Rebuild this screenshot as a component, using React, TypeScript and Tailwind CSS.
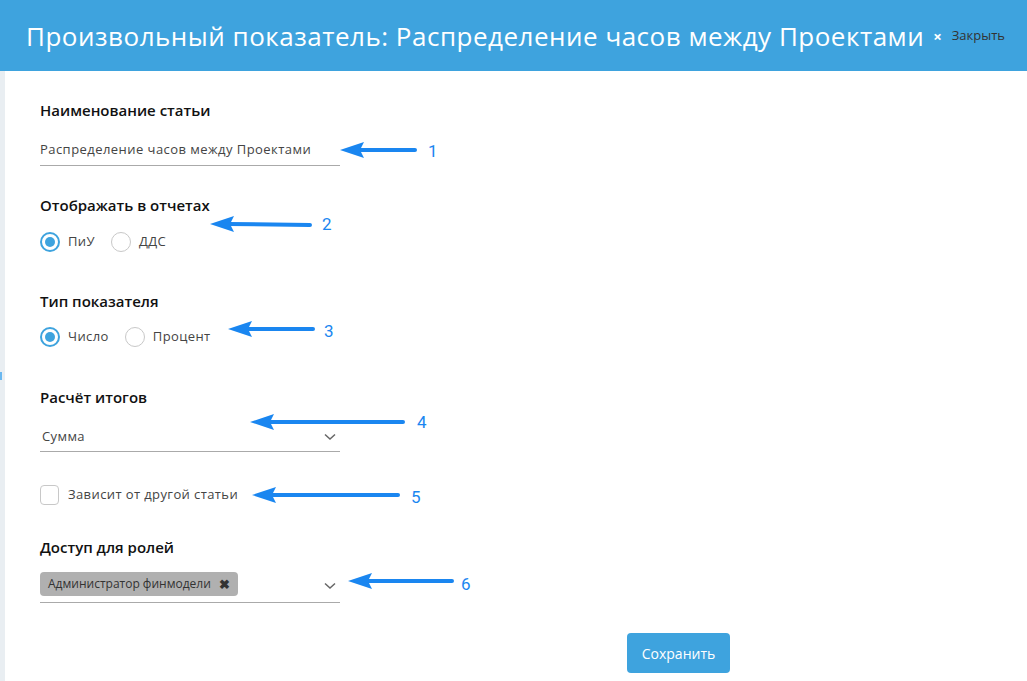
import React from 'react'

const font = { fontFamily: '"Open Sans", "Noto Sans", sans-serif' }

function Chevron() {
    return (
        <svg width="12" height="8" viewBox="0 0 12 8" className="text-[#666]">
            <path d="M1 1.5 L6 6 L11 1.5" fill="none" stroke="currentColor" strokeWidth="1.5" />
        </svg>
    )
}

function Radio({ checked, label }: { checked?: boolean; label: string }) {
    return (
        <div className="flex items-center gap-[8px]">
            <div
                className={
                    checked
                        ? 'w-[20px] h-[20px] rounded-full border-2 border-[#3ea3de] flex items-center justify-center'
                        : 'w-[20px] h-[20px] rounded-full border border-[#c8c8c8]'
                }
            >
                {checked && <div className="w-[10px] h-[10px] rounded-full bg-[#3ea3de]" />}
            </div>
            <span className="text-[13px] text-[#444] tracking-[0.4px]">{label}</span>
        </div>
    )
}

// стрелки-аннотации поверх формы
const arrows = [
    { x1: 340, x2: 415, y1: 150, y2: 150, n: '1', nx: 428, ny: 157 },
    { x1: 210, x2: 310, y1: 224, y2: 225, n: '2', nx: 322, ny: 230 },
    { x1: 228, x2: 313, y1: 329, y2: 329, n: '3', nx: 324, ny: 337 },
    { x1: 250, x2: 403, y1: 422, y2: 422, n: '4', nx: 417, ny: 428 },
    { x1: 252, x2: 398, y1: 495, y2: 495, n: '5', nx: 411, ny: 503 },
    { x1: 348, x2: 452, y1: 581, y2: 581, n: '6', nx: 461, ny: 590 },
]

function Arrows() {
    return (
        <svg className="absolute inset-0 pointer-events-none" width="1027" height="681">
            {arrows.map((a) => (
                <g key={a.n}>
                    <line x1={a.x1 + 18} y1={a.y1} x2={a.x2} y2={a.y2} stroke="#1a86f0" strokeWidth="4" strokeLinecap="round" />
                    <path
                        d={`M${a.x1} ${a.y1} L${a.x1 + 24} ${a.y1 - 8} L${a.x1 + 20} ${a.y1} L${a.x1 + 24} ${a.y1 + 8} Z`}
                        fill="#1a86f0"
                    />
                    <text x={a.nx} y={a.ny} fill="#1a86f0" fontSize="17" fontFamily="Roboto, sans-serif">
                        {a.n}
                    </text>
                </g>
            ))}
        </svg>
    )
}

const label = 'text-[15px] font-semibold text-[#111] leading-[20px]'

export default function App() {
    return (
        <div className="relative w-[1027px] h-[681px] bg-white overflow-hidden" style={font}>
            <div className="h-[71px] bg-[#3ea3de] flex items-center pl-[26px] pr-[22px]">
                <h1 className="text-[26px] text-white font-normal whitespace-nowrap leading-none tracking-[0.5px]">
                    Произвольный показатель: Распределение часов между Проектами
                </h1>
                <div className="ml-auto flex items-center gap-[10px] pt-[1px]">
                    <span className="text-white text-[15px] font-bold leading-none">×</span>
                    <span className="text-[13px] text-[#333]">Закрыть</span>
                </div>
            </div>

            <div className="flex h-[610px]">
                <div className="w-[5px] bg-[#e9eef2] relative">
                    <div className="absolute left-0 top-[301px] w-[2px] h-[8px] bg-[#6bb8f0]" />
                </div>

                <div className="pl-[35px] pt-[29px] flex flex-col w-[725px]">
                    <div className={label}>Наименование статьи</div>
                    <div className="mt-[14px] w-[300px] h-[32px] border-b border-[#aaa] flex items-center text-[13px] text-[#444] tracking-[0.45px]">
                        Распределение часов между Проектами
                    </div>

                    <div className={'mt-[29px] ' + label}>Отображать в отчетах</div>
                    <div className="mt-[17px] flex gap-[16px]">
                        <Radio checked label="ПиУ" />
                        <Radio label="ДДС" />
                    </div>

                    <div className={'mt-[39px] ' + label}>Тип показателя</div>
                    <div className="mt-[16px] flex gap-[16px]">
                        <Radio checked label="Число" />
                        <Radio label="Процент" />
                    </div>

                    <div className={'mt-[40px] ' + label}>Расчёт итогов</div>
                    <div className="mt-[15px] w-[300px] h-[30px] border-b border-[#aaa] flex items-center justify-between pl-[2px] pr-[4px]">
                        <span className="text-[13px] text-[#444] tracking-[0.4px]">Сумма</span>
                        <Chevron />
                    </div>

                    <div className="mt-[33px] flex items-center gap-[9px]">
                        <div className="w-[19px] h-[20px] rounded-[4px] border border-[#c8c8c8]" />
                        <span className="text-[13px] text-[#444] tracking-[0.4px]">Зависит от другой статьи</span>
                    </div>

                    <div className={'mt-[32px] ' + label}>Доступ для ролей</div>
                    <div className="mt-[9px] w-[300px] h-[37px] border-b border-[#aaa] flex items-center justify-between pr-[4px]">
                        <div className="h-[24px] bg-[#b0b0b0] rounded-[4px] flex items-center pl-[8px] pr-[8px] gap-[8px]">
                            <span className="text-[12px] text-[#333]">Администратор финмодели</span>
                            <span className="text-[13px] font-bold text-[#333] leading-none">✖</span>
                        </div>
                        <div className="pt-[4px]">
                            <Chevron />
                        </div>
                    </div>

                    <div className="mt-[30px] flex justify-end">
                        <button className="h-[40px] w-[103px] rounded-[4px] bg-[#3ea3de] text-white text-[14px]">
                            Сохранить
                        </button>
                    </div>
                </div>
            </div>

            <Arrows />
        </div>
    )
}
